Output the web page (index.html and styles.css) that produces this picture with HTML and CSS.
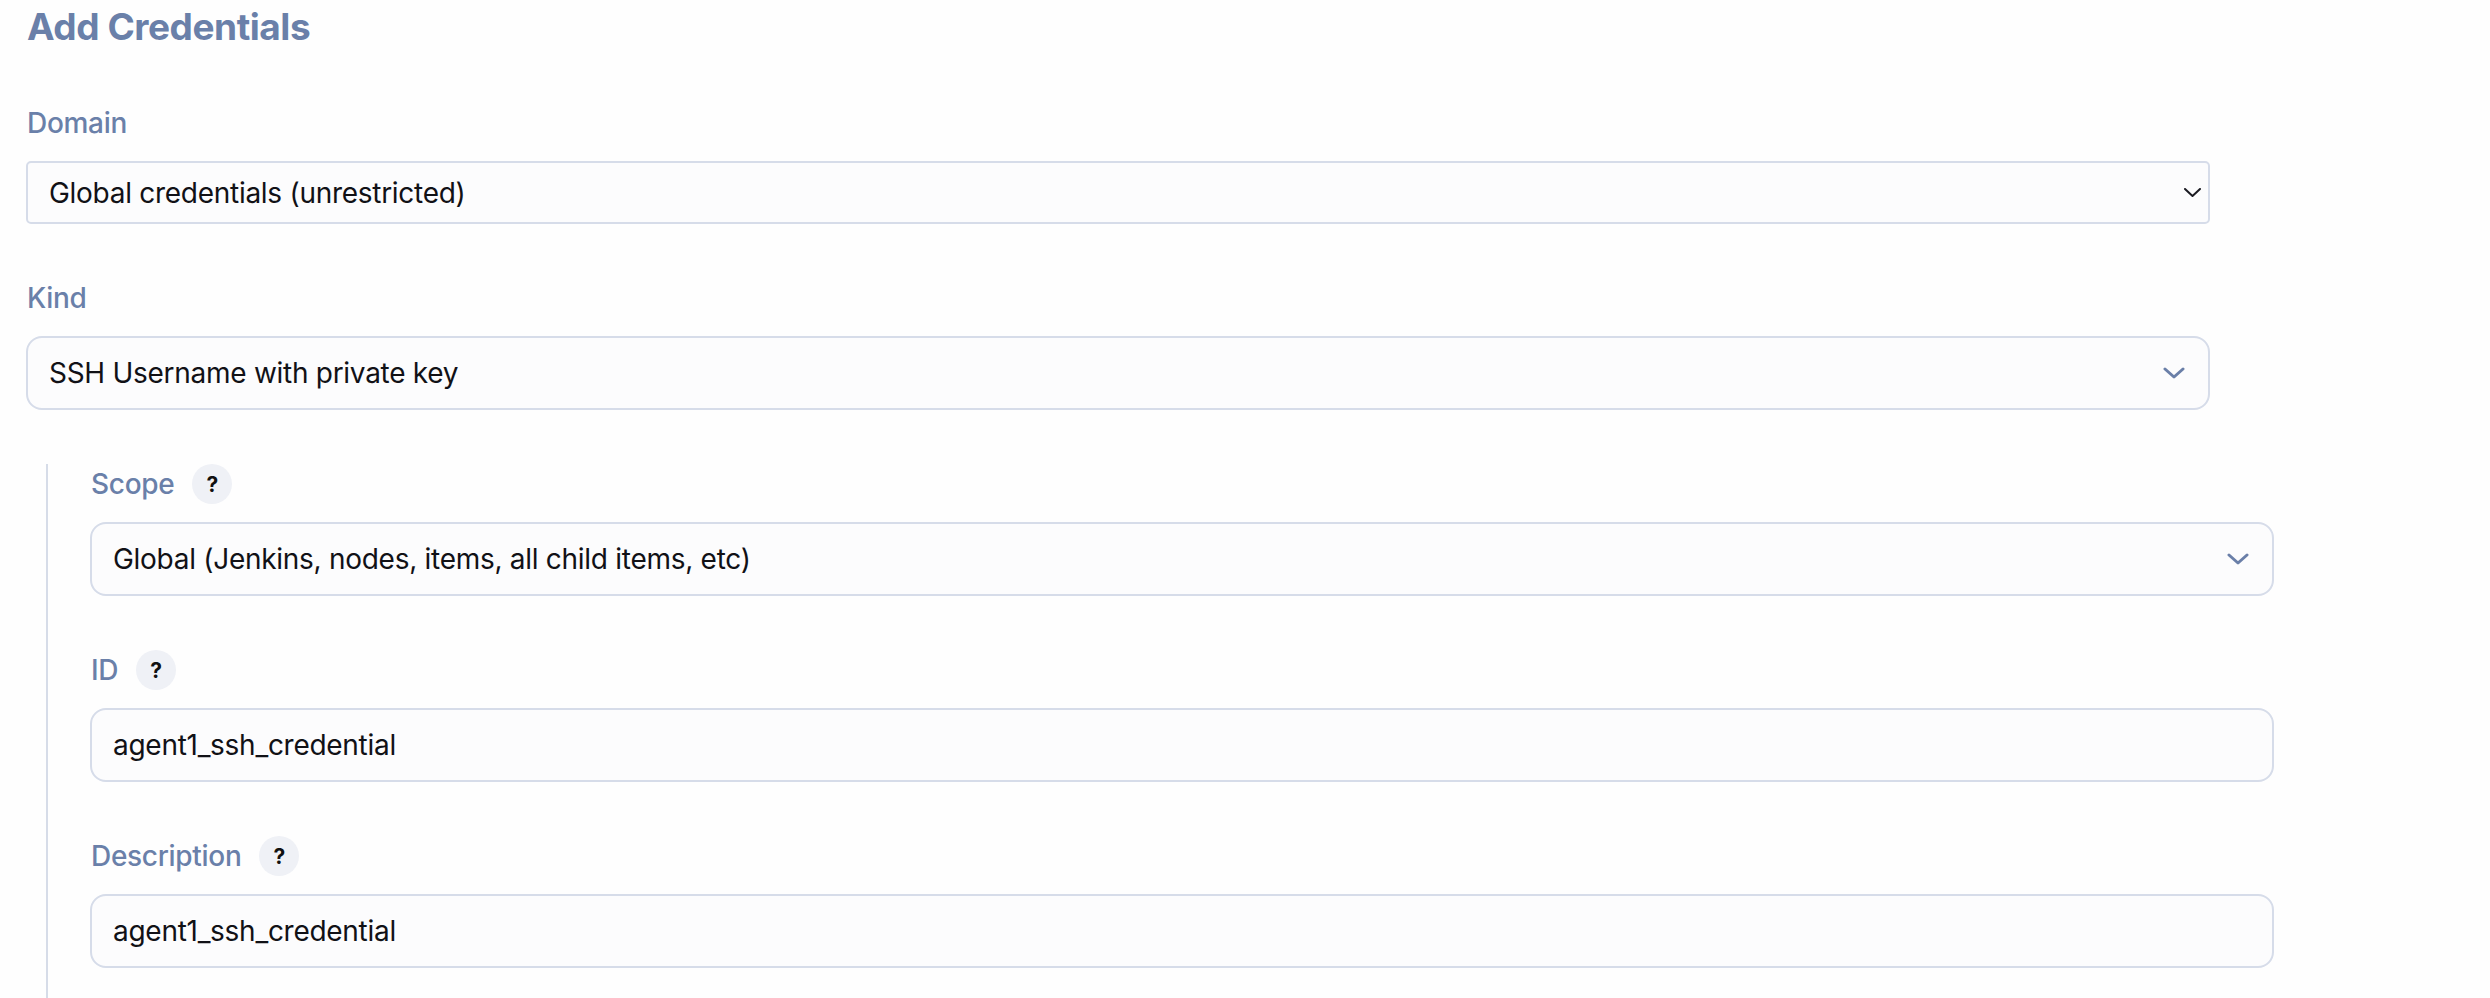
FILE: index.html
```html
<!DOCTYPE html>
<html lang="en">
<head>
<meta charset="utf-8">
<title>Add Credentials</title>
<link rel="stylesheet" href="styles.css">
</head>
<body>
<main class="page">
  <h1 class="title">Add Credentials</h1>

  <section class="field">
    <div class="field-label"><span class="label-text">Domain</span></div>
    <div class="control control-native">
      <span class="value">Global credentials (unrestricted)</span>
      <svg class="chevron chevron-native" viewBox="0 0 17 9" width="17" height="9" aria-hidden="true"><path d="M1 1l7.5 7 7.5-7" fill="none" stroke="#1b1b22" stroke-width="2" stroke-linecap="round" stroke-linejoin="round"/></svg>
    </div>
  </section>

  <section class="field">
    <div class="field-label"><span class="label-text">Kind</span></div>
    <div class="control control-rounded">
      <span class="value">SSH Username with private key</span>
      <svg class="chevron chevron-styled" viewBox="0 0 22 12" width="22" height="12" aria-hidden="true"><path d="M2 2l9 8 9-8" fill="none" stroke="#6a7fa8" stroke-width="3" stroke-linecap="round" stroke-linejoin="round"/></svg>
    </div>
  </section>

  <div class="nested">
    <section class="field">
      <div class="field-label"><span class="label-text">Scope</span><span class="help">?</span></div>
      <div class="control control-rounded">
        <span class="value">Global (Jenkins, nodes, items, all child items, etc)</span>
        <svg class="chevron chevron-styled" viewBox="0 0 22 12" width="22" height="12" aria-hidden="true"><path d="M2 2l9 8 9-8" fill="none" stroke="#6a7fa8" stroke-width="3" stroke-linecap="round" stroke-linejoin="round"/></svg>
      </div>
    </section>

    <section class="field">
      <div class="field-label"><span class="label-text">ID</span><span class="help">?</span></div>
      <div class="control control-rounded">
        <span class="value">agent1_ssh_credential</span>
      </div>
    </section>

    <section class="field field-last">
      <div class="field-label"><span class="label-text">Description</span><span class="help">?</span></div>
      <div class="control control-rounded">
        <span class="value">agent1_ssh_credential</span>
      </div>
    </section>
  </div>
</main>
</body>
</html>
```

FILE: styles.css
```css
html, body {
  margin: 0;
  padding: 0;
  background: #fefefe;
}

body {
  font-family: Inter, "Noto Sans", "Liberation Sans", sans-serif;
  color: #14141a;
  overflow: hidden;
  height: 998px;
}

.page {
  padding: 5px 0 0 26px;
}

.title {
  margin: 0 0 54px 1px;
  font-size: 37px;
  line-height: 44px;
  font-weight: 700;
  color: #6a80a9;
  letter-spacing: -0.45px;
}

.field {
  display: flex;
  flex-direction: column;
  gap: 18px;
  margin-bottom: 54px;
}

.field-last {
  margin-bottom: 0;
}

.field-label {
  display: flex;
  align-items: center;
  gap: 18px;
  height: 40px;
}

.label-text {
  font-size: 28px;
  line-height: 40px;
  color: #6a80a9;
  font-weight: 500;
  letter-spacing: -0.3px;
  padding-left: 1px;
}

.help {
  width: 40px;
  height: 40px;
  border-radius: 50%;
  background: #eff1f6;
  display: flex;
  align-items: center;
  justify-content: center;
  font-size: 21px;
  font-weight: 700;
  color: #111;
}

.control {
  display: flex;
  align-items: center;
  justify-content: space-between;
  box-sizing: border-box;
  width: 2184px;
  background: #fcfcfd;
  border: 2px solid #d6dce9;
  font-size: 28px;
  letter-spacing: -0.28px;
  color: #111116;
  padding: 0 20px 0 21px;
}

.control-native {
  height: 63px;
  border-radius: 5px;
  padding-right: 7px;
}

.control-rounded {
  height: 74px;
  border-radius: 16px;
  padding-right: 23px;
}

.value {
  white-space: nowrap;
}

.chevron {
  flex: none;
}

.nested {
  margin-left: 20px;
  border-left: 2px solid #d6dce8;
  padding-left: 42px;
  padding-bottom: 40px;
}
```
